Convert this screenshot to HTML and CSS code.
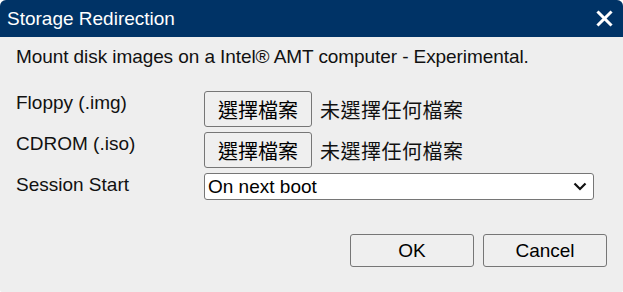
FILE: index.html
```html
<!DOCTYPE html>
<html lang="en">
<head>
  <meta charset="UTF-8" />
  <meta name="viewport" content="width=device-width, initial-scale=1.0" />
  <title>Storage Redirection</title>
  <link rel="stylesheet" href="styles.css">
</head>
<body>
  <div class="dialog">
    <div class="dialog-title">
      <span>Storage Redirection</span>
      <svg class="close" width="17" height="17" viewBox="0 0 17 17">
        <path d="M2.5 2.5 L14.5 14.5 M14.5 2.5 L2.5 14.5" stroke="#fff" stroke-width="3" stroke-linecap="square" />
      </svg>
    </div>
    <div class="dialog-body">
      <p class="intro">Mount disk images on a Intel&reg; AMT computer - Experimental.</p>

      <div class="form-grid">
        <div class="label">Floppy (.img)</div>
        <div class="file-field">
          <button class="btn file-btn">選擇檔案</button>
          <span class="file-name">未選擇任何檔案</span>
        </div>

        <div class="label">CDROM (.iso)</div>
        <div class="file-field">
          <button class="btn file-btn">選擇檔案</button>
          <span class="file-name">未選擇任何檔案</span>
        </div>

        <div class="label label-select">Session Start</div>
        <div class="select-box">
          <span>On next boot</span>
          <svg class="chevron" width="14" height="9" viewBox="0 0 14 9">
            <path d="M1.5 1.5 L7 7 L12.5 1.5" fill="none" stroke="#111" stroke-width="2.2" />
          </svg>
        </div>
      </div>

      <div class="actions">
        <button class="btn action-btn">OK</button>
        <button class="btn action-btn">Cancel</button>
      </div>
    </div>
  </div>
</body>
</html>
```

FILE: styles.css
```css
body {
  margin: 0;
  background-color: #fff;
  font-family: "Liberation Sans", Arial, "Noto Sans CJK TC", sans-serif;
  font-size: 19px;
  color: #111;
}
.dialog {
  width: 623px;
  height: 292px;
  background-color: #eee;
  border-radius: 6px 6px 2px 2px;
  overflow: hidden;
}
.dialog-title {
  height: 37px;
  background-color: #003366;
  color: #fff;
  display: flex;
  align-items: center;
  justify-content: space-between;
  padding: 0 10px 0 7px;
}
.close {
  margin-top: -1px;
}
.dialog-body {
  padding: 0 16px;
}
.intro {
  margin: 0;
  padding-top: 9px;
  height: 45px;
  letter-spacing: -0.08px;
}
.form-grid {
  display: grid;
  grid-template-columns: 188px 390px;
  row-gap: 5px;
  align-items: start;
}
.label {
  padding-top: 1px;
}
.file-field {
  display: flex;
  align-items: center;
  gap: 8px;
}
.btn {
  font-family: "Liberation Sans", Arial, "Noto Sans CJK TC", sans-serif;
  background-color: #efefef;
  border: 1px solid #767676;
  border-radius: 3px;
  color: #000;
  margin: 0;
}
.file-btn {
  width: 108px;
  height: 36px;
  font-size: 20px;
  padding: 0;
  font-family: "Noto Sans CJK TC", sans-serif;
}
.file-name {
  font-family: "Noto Sans CJK TC", sans-serif;
  font-size: 20px;
  letter-spacing: 0.5px;
}
.select-box {
  height: 27px;
  box-sizing: border-box;
  background-color: #fff;
  border: 1px solid #767676;
  border-radius: 3px;
  display: flex;
  align-items: center;
  justify-content: space-between;
  padding: 0 6px 0 3px;
  color: #000;
}
.actions {
  display: flex;
  justify-content: flex-end;
  gap: 9px;
  margin-top: 34px;
}
.action-btn {
  width: 124px;
  height: 33px;
  font-size: 19px;
}
```
